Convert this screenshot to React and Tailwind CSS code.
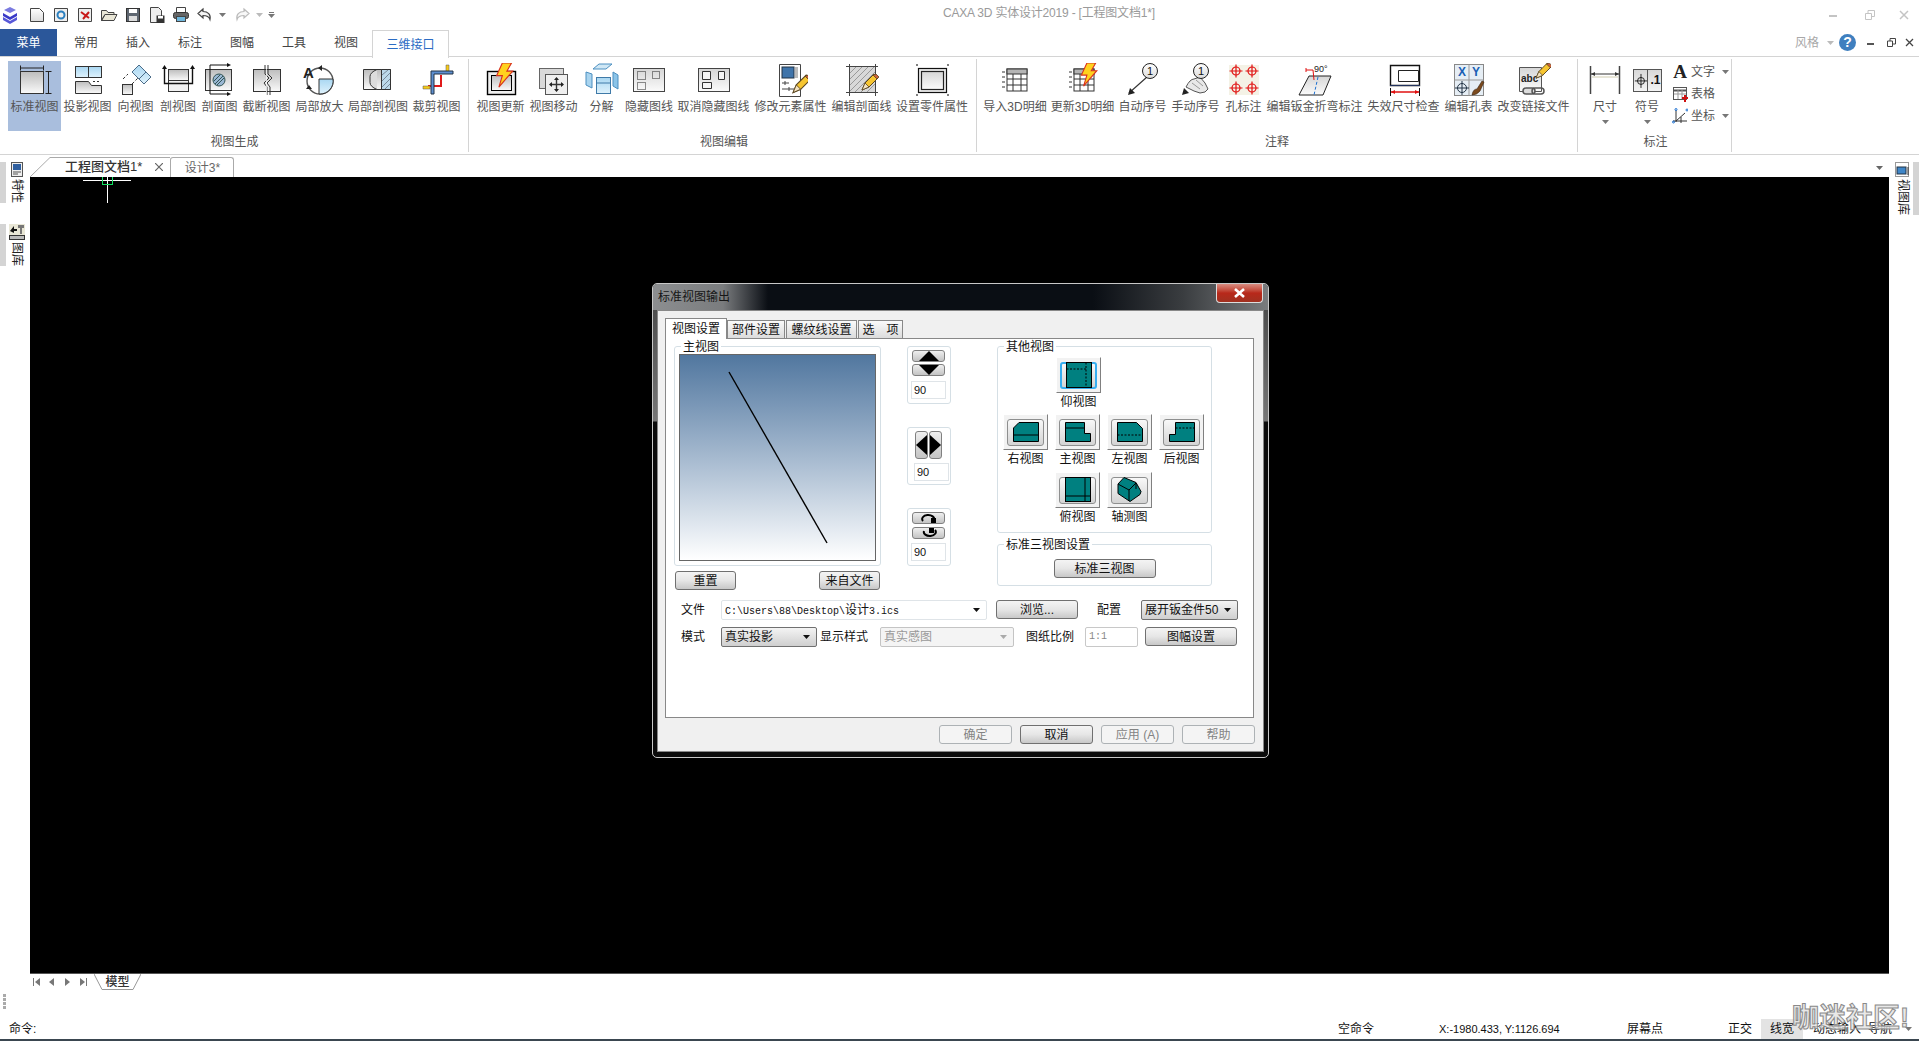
import React from "react";

const D = "#333";
const Bolt = ({ x = 0, y = 0, s = 1 }) => (
  <path transform={`translate(${x} ${y}) scale(${s})`} d="M9 0h8l-4 7h5L6 21l3-10H4z" fill="#ffd21e" stroke="#d8321e" strokeWidth="1" />
);
const Pencil = ({ x = 0, y = 0, s = 1 }) => (
  <g transform={`translate(${x} ${y}) scale(${s})`}>
    <path d="M0 16l3-7L12 0l4 4-9 9z" fill="#f6c530" stroke="#5a4520" strokeWidth="1" />
    <path d="M11 1l4 4 2-2-3-3z" fill="#c9603a" stroke="#5a4520" strokeWidth=".8" />
    <path d="M0 16l3-7 4 4z" fill="#f4e3c0" stroke="#5a4520" strokeWidth=".8" />
  </g>
);
const Target = ({ x, y }) => (
  <g stroke="#e01010" fill="none" strokeWidth="1.2">
    <circle cx={x} cy={y} r="4" />
    <path d={`M${x - 6.5} ${y}h13M${x} ${y - 6.5}v13`} />
  </g>
);
const Table = ({ x = 0 }) => (
  <g transform={`translate(${x} 0)`}>
    <rect x="6" y="6" width="20" height="22" fill="#fff" stroke={D} />
    <rect x="6" y="6" width="20" height="5" fill="#b5b5b5" stroke={D} />
    <path d="M6 16h20M6 22h20M12 11v17M20 11v17" stroke={D} />
    <path d="M1 9h3M1 14h3M1 19h3M1 24h3" stroke={D} />
  </g>
);

const Ico = ({ children, w = 34 }) => (
  <svg width={w} height="34" viewBox={`0 0 ${w} 34`} fill="none">
    {children}
  </svg>
);

const icons = {
  std: (
    <Ico>
      <rect x="2.5" y="8.5" width="23" height="22" fill="url(#gg)" stroke={D} />
      <path d="M2.5 5h23M2.5 2.5v5M25.5 2.5v5M30.5 8.500v22M27.500 8.500h6M27.500 30.500h6" stroke="#222" />
    </Ico>
  ),
  proj: (
    <Ico>
      <rect x="4.500" y="3.500" width="26" height="11" fill="url(#gb)" stroke={D} />
      <path d="M17.500 3.500v11" stroke={D} />
      <path d="M4.500 18.500h13l3 4h10v8h-26z" fill="url(#gg)" stroke={D} />
      <path d="M22 18.500h8" stroke={D} strokeDasharray="2 2" />
    </Ico>
  ),
  dir: (
    <Ico>
      <path d="M13 9l7-7 12 12-7 7z" fill="url(#gb)" stroke="#4b6c88" />
      <path d="M20 16l7-7" stroke="#4b6c88" />
      <rect x="3.500" y="21.500" width="10" height="10" fill="url(#gg)" stroke={D} />
      <path d="M4 16l5-5M13 21l6-6" stroke={D} strokeDasharray="3 2" />
    </Ico>
  ),
  sec: (
    <Ico>
      <rect x="7.500" y="6.500" width="20" height="11" fill="url(#gg)" stroke={D} />
      <rect x="7.500" y="17.500" width="20" height="11" fill="#f2f2f2" stroke={D} />
      <path d="M3.500 5v15.500h28V5" stroke="#111" strokeWidth="1.4" />
      <path d="M1 6l2.500-4 2.500 4zM29 6l2.500-4 2.500 4z" fill="#111" />
    </Ico>
  ),
  secf: (
    <Ico>
      <rect x="2.500" y="6.500" width="26" height="21" fill="url(#gg)" stroke={D} />
      <circle cx="16" cy="17" r="6" fill="#9ab7d3" stroke="#355" />
      <path d="M12 21l8-8M11 18l6-6M14 22l7-7" stroke="#355" />
      <path d="M7 31V2h18M7 31h18" stroke="#111" />
      <path d="M24 0l4 2-4 2zM24 29l4 2-4 2z" fill="#111" />
    </Ico>
  ),
  brk: (
    <Ico>
      <rect x="3.500" y="6.500" width="27" height="22" fill="url(#gg)" stroke={D} />
      <path d="M15 2v9l4 4-5 5 3 4v8M18 2v9l4 4-5 5 3 4v8" stroke={D} fill="none" />
      <path d="M16 6h1v26h-1z" fill="#fff" opacity=".7" />
    </Ico>
  ),
  zoom: (
    <Ico>
      <circle cx="17" cy="18" r="13" stroke="#555" strokeWidth="1.4" />
      <path d="M16 16h14a13 13 0 0 1-13 15h-1z" fill="url(#gb)" stroke={D} />
      <text x="0" y="15" fontSize="15" fontWeight="700" fill="#222" fontFamily="Liberation Sans">A</text>
      <path d="M19 2l-4 3 4 3zM6 22l-3 4h6z" fill="#222" />
    </Ico>
  ),
  lsec: (
    <Ico>
      <path d="M2.500 6.500h27v20h-27z" fill="url(#gg)" stroke={D} />
      <path d="M20.500 6.500h9v20h-9z" fill="#bcd9ea" stroke={D} />
      <path d="M21 12l6-5M21 18l8-8M21 24l8-8M24 26l5-5" stroke="#789" />
      <path d="M10.500 6.500l6 0-5 0zM16 6.500q-7 3-7 7v6q0 4 7 7" stroke={D} fill="#ddd" />
    </Ico>
  ),
  crop: (
    <Ico>
      <path d="M8 29V22h12V12h2v12H8z" fill="#e01a1a" />
      <path d="M3 23h7v3H3zM26 2h3v7h-3z" fill="#f7ca18" stroke="#555" strokeWidth=".5" />
      <path d="M11 31V8h22v3H14v20z" fill="#5d8fd0" stroke="#234" />
    </Ico>
  ),
  upd: (
    <Ico>
      <rect x="3.500" y="8.500" width="28" height="23" fill="#eee" stroke="#000" strokeWidth="1.400" />
      <rect x="7.500" y="12.500" width="20" height="15" fill="url(#gg)" stroke="#000" />
      <Bolt x="8" y="0" s="1.150" />
    </Ico>
  ),
  move: (
    <Ico>
      <rect x="2.500" y="5.500" width="24" height="20" fill="#d9d9d9" stroke="#666" />
      <rect x="8.500" y="11.500" width="22" height="20" fill="#efefef" stroke="#555" />
      <path d="M19.500 15v13M13 21.500h13" stroke="#333" strokeWidth="1.400" />
      <path d="M19.500 14l-2.500 3h5zM19.500 29l-2.500-3h5zM12 21.500l3-2.500v5zM27 21.500l-3-2.500v5z" fill="#222" />
    </Ico>
  ),
  exp: (
    <Ico>
      <path d="M8 6l6-5h13l-6 5z" fill="#cfe7f5" stroke="#4c8fc0" />
      <path d="M1 9l6 2v14l-6-3z" fill="#a9d4ef" stroke="#4c8fc0" />
      <path d="M28 9l5 3v14l-5-3z" fill="#8cc4e8" stroke="#4c8fc0" />
      <rect x="11.500" y="14.500" width="14" height="16" fill="url(#gb)" stroke="#3f7aa8" />
      <path d="M11.500 20h14" stroke="#3f7aa8" />
    </Ico>
  ),
  hide: (
    <Ico>
      <rect x="1.500" y="5.500" width="31" height="23" fill="url(#gg2)" stroke="#444" />
      <path d="M5.500 8.500h8v8h-8zM20.500 8.500h7v7h-7zM5.500 19.500h8v7h-8z" stroke="#222" strokeDasharray="1 1" />
    </Ico>
  ),
  unhide: (
    <Ico>
      <rect x="1.500" y="5.500" width="31" height="23" fill="url(#gg2)" stroke="#444" />
      <path d="M5.500 8.500h8v8h-8zM21.500 8.500h6v8h-6zM5.500 19.500h9v6h-9z" stroke="#333" fill="#f5f5f5" />
    </Ico>
  ),
  attr: (
    <Ico>
      <path d="M5.500 1.500h21v32h-21z" fill="#fff" stroke="#444" />
      <rect x="8" y="4" width="12" height="11" fill="#3f74aa" stroke="#234" />
      <rect x="21" y="4" width="3" height="11" fill="#bbb" />
      <path d="M8 20h7M8 26h12M11 18v4M15 24v4" stroke="#444" />
      <Pencil x="19" y="12" s="1.100" />
    </Ico>
  ),
  hatch: (
    <Ico>
      <rect x="4.500" y="3.500" width="26" height="26" fill="#d8d8d8" />
      <path d="M4 29L30 3M10 29L30 9M16 29L30 15M4 23L24 3M4 17L18 3M4 11L12 3M22 29l8-8" stroke="#999" />
      <path d="M1 3.500h32M1 29.500h32M4.500 1v32M30.500 1v32" stroke="#444" />
      <Pencil x="17" y="11" s="1" />
    </Ico>
  ),
  part: (
    <Ico>
      <rect x="3.500" y="5.500" width="28" height="24" fill="#eee" stroke="#111" strokeWidth="1.200" />
      <rect x="6.500" y="8.500" width="22" height="18" fill="url(#gg2)" stroke="#222" strokeWidth="1.200" />
      <path d="M1 2h2M32 2h2M1 32h2M32 32h2" stroke="#000" />
    </Ico>
  ),
  imp: <Ico><Table x="3" /></Ico>,
  up3: (
    <Ico>
      <Table x="2" />
      <Bolt x="11" y="0" s="1.100" />
    </Ico>
  ),
  auto: (
    <Ico>
      <path d="M3 30L21 14" stroke="#333" strokeWidth="1.200" />
      <path d="M2 32l2-7 5 5z" fill="#222" />
      <circle cx="24" cy="8" r="7.500" fill="url(#gg3)" stroke="#222" />
      <text x="24" y="12" fontSize="11" fill="#111" textAnchor="middle" fontFamily="Liberation Sans">1</text>
    </Ico>
  ),
  man: (
    <Ico>
      <path d="M3 32l2-7 5 5z" fill="#222" />
      <path d="M7 24q4-8 8-8l6-2 5 6 3 6q-2 4-8 4l-6-2z" fill="#e8e8e8" stroke="#555" />
      <path d="M13 20l8 6M17 17l7 6" stroke="#999" />
      <circle cx="22" cy="8" r="7.500" fill="url(#gg3)" stroke="#222" />
      <text x="22" y="12" fontSize="11" fill="#111" textAnchor="middle" fontFamily="Liberation Sans">1</text>
    </Ico>
  ),
  hole: (
    <Ico>
      <rect x="2" y="2" width="30" height="30" fill="#f4f2e6" />
      <Target x="9" y="8" />
      <Target x="25" y="8" />
      <Target x="9" y="25" />
      <Target x="25" y="25" />
    </Ico>
  ),
  bend: (
    <Ico w="36">
      <path d="M2 32L12 13h22l-8 19z" fill="url(#gg2)" stroke="#222" />
      <path d="M21 14l-4 18" stroke="#1c6fd0" strokeDasharray="3 2" />
      <path d="M9 7h7l1 10M9 5v4" stroke="#e01010" />
      <text x="17" y="9" fontSize="9" fill="#222" fontFamily="Liberation Sans">90°</text>
    </Ico>
  ),
  chk: (
    <Ico>
      <path d="M3.500 2.500h29v20h-29z" fill="#fff" stroke="#111" strokeWidth="1.400" />
      <path d="M11.500 7.500h20v11h-20z" stroke="#222" />
      <path d="M3.500 22.500h29" stroke="#35a" strokeDasharray="1 1" />
      <path d="M4 29h28" stroke="#e01010" strokeWidth="1.500" />
      <path d="M4 29l4-2v4zM32 29l-4-2v4z" fill="#e01010" />
      <path d="M3.500 25v8M32.500 25v8" stroke="#111" />
    </Ico>
  ),
  holetb: (
    <Ico>
      <rect x="2.500" y="1.500" width="29" height="31" fill="#e6eef5" stroke="#888" />
      <path d="M17 1.500v31M2.500 17h29" stroke="#999" />
      <text x="10" y="13" fontSize="12" fontWeight="700" fill="#1a5fb4" textAnchor="middle" fontFamily="Liberation Sans">X</text>
      <text x="24" y="13" fontSize="12" fontWeight="700" fill="#1a5fb4" textAnchor="middle" fontFamily="Liberation Sans">Y</text>
      <circle cx="10" cy="25" r="4.500" stroke="#234" />
      <path d="M3 25h14M10 18v14" stroke="#234" />
      <path d="M20 32q1-6 5-6l5-8 2 1-4 9q-3 4-8 4z" fill="#7b4a1e" stroke="#3a2410" strokeWidth=".6" />
    </Ico>
  ),
  link: (
    <Ico>
      <path d="M2.500 4.500h22v24h-22z" fill="url(#gg2)" stroke="#555" />
      <text x="4" y="19" fontSize="10" fontWeight="700" fill="#222" fontFamily="Liberation Sans">abc</text>
      <Pencil x="19" y="0" s=".95" />
      <rect x="6" y="25" width="12" height="6" rx="3" fill="#ddd" stroke="#555" strokeWidth="1.500" />
      <rect x="15" y="25" width="12" height="6" rx="3" fill="none" stroke="#555" strokeWidth="1.500" />
    </Ico>
  ),
};

const Item = ({ icon, label, w = "w-[53px]", hi }) => (
  <div className={`${w} h-[70px] flex flex-col items-center shrink-0 ${hi ? "bg-[#a9bedd]" : ""}`}>
    <div className="h-[38px] flex items-center justify-center">{icons[icon]}</div>
    <div className="h-[16px] leading-[16px] whitespace-nowrap">{label}</div>
  </div>
);

const Group = ({ w, pl, label, lp, children }) => (
  <div className={`${w} ${pl} h-[93px] mt-[2px] border-r border-[#d4d4d4] flex flex-col shrink-0`}>
    <div className="flex h-[70px] mt-[2px]">{children}</div>
    <div className={`${lp} h-[16px] leading-[16px] mt-[3px] text-center text-[#555]`}>{label}</div>
  </div>
);

const Tri = ({ c = "#777" }) => (
  <svg width="7" height="4" viewBox="0 0 7 4" className="shrink-0">
    <path d="M0 0h7L3.500 4z" fill={c} />
  </svg>
);

const Q = ({ children, w = 24 }) => (
  <div className={`${w === 24 ? "w-[24px]" : "w-[11px]"} h-[18px] flex items-center justify-center shrink-0`}>
    <svg width={w === 24 ? 18 : 9} height="18" viewBox={w === 24 ? "0 0 18 18" : "0 0 9 18"} fill="none">
      {children}
    </svg>
  </div>
);

const TitleBar = () => (
  <div className="h-[29px] flex items-center relative shrink-0">
    <div className="w-[25px] pl-[2px] shrink-0">
      <svg width="16" height="18" viewBox="0 0 16 18">
        <path d="M8 1l6 3-6 3-6-3z" fill="#7a7ae0" />
        <path d="M1 7l7 4 7-4v3l-7 4-7-4z" fill="#3a3ac8" />
        <path d="M1 11l7 4 7-4v3l-7 4-7-4z" fill="#5858d8" />
      </svg>
    </div>
    <Q><path d="M2.500 2.500h9l4 4v9h-13z" fill="url(#gg3)" stroke="#444" /></Q>
    <Q>
      <path d="M2.500 2.500h13v13h-13z" fill="#eee" stroke="#444" />
      <circle cx="9" cy="9" r="3.500" stroke="#2a7fbf" strokeWidth="2" />
    </Q>
    <Q>
      <path d="M2.500 2.500h13v13h-13z" fill="#eee" stroke="#444" />
      <path d="M5 6l8 6M13 6l-6 7" stroke="#c81818" strokeWidth="2" />
    </Q>
    <Q><path d="M1.500 14.500v-10h5l1.500 2h6v2H5l-3.500 6zM5 8.500h12l-3 6H1.500z" fill="#e9e6d6" stroke="#444" /></Q>
    <Q>
      <rect x="2.500" y="2.500" width="13" height="13" fill="#5e6670" stroke="#333" />
      <rect x="5" y="3" width="8" height="4" fill="#fff" />
      <rect x="5" y="10" width="8" height="5" fill="#ddd" />
    </Q>
    <Q>
      <path d="M2.500 1.500h8l3 3v12h-11z" fill="#eee" stroke="#444" />
      <rect x="8.500" y="9.500" width="8" height="7.500" fill="#333" />
      <rect x="10" y="10" width="5" height="2.500" fill="#fff" />
    </Q>
    <Q>
      <path d="M4.500 6V1.500h9V6" fill="#fff" stroke="#444" />
      <rect x="1.500" y="6.500" width="15" height="6" rx="2" fill="#666" stroke="#333" />
      <rect x="4.500" y="10.500" width="9" height="5" fill="#6fb7dd" stroke="#444" />
    </Q>
    <Q><path d="M7 3L2 7.500 7 12V9.500c4 0 6 1 7 4 1-5-2-8-7-8z" fill="#f4f4f4" stroke="#444" strokeWidth="1.200" /></Q>
    <div className="w-[11px] flex justify-center"><Tri /></div>
    <div className="w-[2px]" />
    <Q><path d="M11 3l5 4.500L11 12V9.500c-4 0-6 1-7 4-1-5 2-8 7-8z" fill="#f8f8f8" stroke="#bbb" strokeWidth="1.200" /></Q>
    <div className="w-[11px] flex justify-center"><Tri c="#bbb" /></div>
    <div className="w-[8px] flex flex-col items-center gap-[1px] ml-[2px]">
      <div className="w-[5px] h-[1px] bg-[#777]" />
      <Tri />
    </div>
    <div className="absolute left-[943px] top-[3px] leading-[20px] text-[#9a9a9a] tracking-[-0.2px] whitespace-nowrap">CAXA 3D 实体设计2019 - [工程图文档1*]</div>
    <div className="ml-auto flex items-center pr-[10px]">
      <div className="w-[8px] h-[2px] bg-[#c4c4c4] mt-[2px]" />
      <svg className="ml-[28px]" width="10" height="10" viewBox="0 0 10 10" fill="none" stroke="#c4c4c4"><path d="M.5 3.500h6v6h-6zM3 3.500V.5h6.500v6H7" /></svg>
      <svg className="ml-[24px]" width="10" height="10" viewBox="0 0 10 10" fill="none" stroke="#c4c4c4" strokeWidth="1.500"><path d="M1 1l8 8M9 1l-8 8" /></svg>
    </div>
  </div>
);

const Tabs = () => (
  <div className="h-[28px] flex shrink-0 border-b border-[#d4d4d4]">
    <div className="w-[57px] h-[27px] bg-[#2b579a] text-white flex items-center justify-center">菜单</div>
    <div className="w-[3px]" />
    {["常用", "插入", "标注", "图幅", "工具", "视图"].map((t) => (
      <div key={t} className="w-[52px] flex items-center justify-center text-[#444]">{t}</div>
    ))}
    <div className="w-[77px] h-[28px] mt-[1px] bg-white border-x border-t border-[#d4d4d4] text-[#2b6cc4] flex items-center justify-center">三维接口</div>
    <div className="ml-auto flex items-center pr-[5px]">
      <span className="text-[#a8a8a8] w-[32px]">风格</span>
      <Tri c="#bbb" />
      <div className="ml-[5px] w-[17px] h-[17px] rounded-full bg-[#3f7fbf] text-white text-[14px] font-bold leading-[17px] text-center">?</div>
      <div className="ml-[11px] w-[7px] h-[2px] bg-[#555] mt-[2px]" />
      <svg className="ml-[13px]" width="9" height="9" viewBox="0 0 9 9" fill="none" stroke="#444"><path d="M.5 3h5v5.500h-5zM3 3V.5h5.500V6H6" /></svg>
      <svg className="ml-[9px]" width="9" height="9" viewBox="0 0 9 9" fill="none" stroke="#444" strokeWidth="1.300"><path d="M1 1l7 7M8 1L1 8" /></svg>
    </div>
  </div>
);

const Ribbon = () => (
  <div className="h-[98px] flex border-b border-[#d4d4d4] shrink-0 text-[#555]">
    <Group w="w-[469px]" pl="pl-[8px]" lp="pr-[7px]" label="视图生成">
      <Item icon="std" label="标准视图" hi />
      <Item icon="proj" label="投影视图" />
      <Item icon="dir" label="向视图" w="w-[43px]" />
      <Item icon="sec" label="剖视图" w="w-[42px]" />
      <Item icon="secf" label="剖面图" w="w-[41px]" />
      <Item icon="brk" label="截断视图" />
      <Item icon="zoom" label="局部放大" />
      <Item icon="lsec" label="局部剖视图" w="w-[64px]" />
      <Item icon="crop" label="裁剪视图" />
    </Group>
    <Group w="w-[508px]" pl="pl-[5px]" lp="pr-[2px]" label="视图编辑">
      <Item icon="upd" label="视图更新" />
      <Item icon="move" label="视图移动" />
      <Item icon="exp" label="分解" w="w-[43px]" />
      <Item icon="hide" label="隐藏图线" w="w-[52px]" />
      <Item icon="unhide" label="取消隐藏图线" w="w-[77px]" />
      <Item icon="attr" label="修改元素属性" w="w-[77px]" />
      <Item icon="hatch" label="编辑剖面线" w="w-[65px]" />
      <Item icon="part" label="设置零件属性" w="w-[76px]" />
    </Group>
    <Group w="w-[601px]" pl="pl-[5px]" lp="pr-[5px]" label="注释">
      <Item icon="imp" label="导入3D明细" w="w-[66px]" />
      <Item icon="up3" label="更新3D明细" w="w-[69px]" />
      <Item icon="auto" label="自动序号" w="w-[51px]" />
      <Item icon="man" label="手动序号" w="w-[55px]" />
      <Item icon="hole" label="孔标注" w="w-[41px]" />
      <Item icon="bend" label="编辑钣金折弯标注" w="w-[101px]" />
      <Item icon="chk" label="失效尺寸检查" w="w-[77px]" />
      <Item icon="holetb" label="编辑孔表" />
      <Item icon="link" label="改变链接文件" w="w-[77px]" />
    </Group>
    <Group w="w-[154px]" pl="pl-[7px]" lp="pr-[5px]" label="标注">
      <div className="w-[40px] h-[70px] flex flex-col items-center shrink-0">
        <div className="h-[38px] flex items-center">
          <svg width="32" height="30" viewBox="0 0 32 30" fill="none">
            <path d="M1.500 1v28M30.500 1v28" stroke="#444" strokeWidth="1.500" />
            <path d="M2 9h28" stroke="#333" />
            <path d="M2 9l4-2v4zM30 9l-4-2v4z" fill="#333" />
            <path d="M3 11h26v2H3z" fill="#e8e6d8" />
          </svg>
        </div>
        <div className="h-[16px] leading-[16px]">尺寸</div>
        <div className="mt-[5px]"><Tri /></div>
      </div>
      <div className="w-[44px] h-[70px] flex flex-col items-center shrink-0">
        <div className="h-[38px] flex items-center">
          <div className="w-[29px] h-[23px] border border-[#555] bg-gradient-to-b from-[#d8d8d8] to-[#f4f4f4] flex items-center text-[#111]">
            <svg width="16" height="21" viewBox="0 0 16 21" fill="none" stroke="#111"><circle cx="8" cy="11" r="4" /><path d="M1 11h14M8 3v16" /></svg>
            <div className="h-[21px] border-l border-[#555] text-[12px] font-bold leading-[21px] pl-[2px]">.1</div>
          </div>
        </div>
        <div className="h-[16px] leading-[16px]">符号</div>
        <div className="mt-[5px]"><Tri /></div>
      </div>
      <div className="flex flex-col w-[60px] shrink-0">
        {[
          { t: "文字", a: 1, i: <span className="text-[19px] font-bold text-[#222] leading-[22px] [font-family:'Liberation_Serif',serif]">A</span> },
          { t: "表格", a: 0, i: (
            <svg width="15" height="15" viewBox="0 0 15 15" fill="none"><rect x=".5" y=".5" width="13" height="12" fill="#fff" stroke="#555" /><path d="M.5 3.500h13" stroke="#555" strokeWidth="2" /><path d="M5 3v9M9 3v9M1 7h12" stroke="#999" /><path d="M9 11h6M12 8v7" stroke="#d01010" strokeWidth="2" /></svg>
          ) },
          { t: "坐标", a: 1, i: (
            <svg width="16" height="16" viewBox="0 0 16 16" fill="none" stroke="#333"><path d="M4 2v12M1 13h14M4 13l9-8M9 15V9" /><circle cx="4" cy="1.500" r="1" stroke="#1a6fd0" /><circle cx="15" cy="2" r="1" stroke="#1a6fd0" /><circle cx="1.500" cy="14" r="1" stroke="#1a6fd0" /></svg>
          ) },
        ].map((r) => (
          <div key={r.t} className="h-[22px] flex items-center">
            <div className="w-[22px] flex justify-center shrink-0">{r.i}</div>
            <span className="w-[31px] shrink-0">{r.t}</span>
            {r.a ? <Tri /> : null}
          </div>
        ))}
      </div>
    </Group>
  </div>
);

const DocTabs = () => (
  <div className="h-[22px] flex items-end relative shrink-0">
    <div className="relative w-[140px] h-[20px] flex items-center">
      <svg className="absolute left-0 top-0" width="140" height="20" fill="none"><path d="M0 20L20 .5h120" stroke="#aaa" /></svg>
      <span className="ml-[35px] w-[90px] whitespace-nowrap text-[13px] text-[#333] font-medium">工程图文档1*</span>
      <svg width="8" height="8" viewBox="0 0 8 8" stroke="#666" fill="none" strokeWidth="1.200"><path d="M0 0l8 8M8 0L0 8" /></svg>
    </div>
    <div className="w-[64px] h-[20px] pl-[1px] border-x border-t border-[#aaa] rounded-tr-[3px] rounded-tl-[3px] flex items-center justify-center text-[#666]">设计3*</div>
    <div className="ml-auto mb-[7px] mr-[6px]"><Tri c="#666" /></div>
  </div>
);

const Canvas = () => (
  <div className="flex-1 bg-black relative overflow-hidden border-b border-[#555]">
    <div className="absolute left-[53px] top-[3px] w-[48px] h-px bg-white" />
    <div className="absolute left-[77px] top-0 w-px h-[26px] bg-white" />
    <div className="absolute left-[72px] -top-[1px] w-[11px] h-[9px] border border-[#10e060]" />
  </div>
);

const Side = ({ side, items }) => (
  <div className={`w-[30px] shrink-0 flex flex-col gap-[21px] pt-[7px] ${side === "r" ? "items-end" : ""}`}>
    {items.map((it) => (
      <div key={it.t} className={`flex ${side === "r" ? "flex-row-reverse w-[29px]" : "w-[30px]"}`}>
        <div className="w-[6px] bg-[#d4d4d4]" />
        <div className={`flex flex-col items-center ${side === "r" ? "w-[23px] pl-[2px]" : "w-[22px]"}`}>
          {it.i}
          <div className="[writing-mode:vertical-rl] [text-orientation:sideways] leading-[14px] text-[#222] mt-[2px]">{it.t}</div>
        </div>
      </div>
    ))}
  </div>
);

const Btn = ({ children, w, dis, cls = "" }) => (
  <div
    className={`${w} h-[19px] shrink-0 rounded-[3px] border flex items-center justify-center leading-none ${
      dis
        ? "border-[#adb2b5] bg-[#f4f4f4] text-[#838383]"
        : "border-[#707070] bg-gradient-to-b from-[#f4f4f4] via-[#e6e6e6] to-[#c8c8c8] text-[#111]"
    } ${cls}`}
  >
    {children}
  </div>
);

const Box = ({ cls, legend, children }) => (
  <div className={`relative border border-[#d5dfe5] rounded-[3px] ${cls}`}>
    {legend ? <div className="absolute left-[6px] -top-[6px] bg-white px-[2px] leading-[13px] text-[#111]">{legend}</div> : null}
    {children}
  </div>
);

const Num = ({ ml = "ml-[3px]" }) => (
  <div className={`${ml} w-[35px] h-[18px] border border-[#dfe4e8] bg-white text-[11px] leading-[17px] pl-[2px] text-[#111]`}>90</div>
);

const Spin = ({ children, num }) => (
  <Box cls="w-[44px] h-[58px] flex flex-col">
    {children}
    {num}
  </Box>
);

const MiniBtn = ({ children, cls }) => (
  <div className={`${cls} rounded-[3px] border border-[#808080] bg-gradient-to-b from-[#efefef] to-[#c4c4c4] flex items-center justify-center`}>{children}</div>
);

const shapes = {
  bottom: <g><rect x=".5" y=".5" width="25" height="25" fill="#008080" stroke="#000" /><path d="M.5 7h20M20 .5v25" stroke="#000" strokeDasharray="2 1.500" /></g>,
  right: <g><path d="M6 .5h19.500v19H.5V6z" fill="#008080" stroke="#000" /><path d="M.5 13h25" stroke="#000" /></g>,
  main: <g><path d="M.5.5h19v11h6v8H.5z" fill="#008080" stroke="#000" /><path d="M.5 6h19" stroke="#000" /></g>,
  left: <g><path d="M.5.5h19l6 6v13H.5z" fill="#008080" stroke="#000" /><path d="M.5 13h25" stroke="#000" strokeDasharray="2 1.500" /></g>,
  back: <g><path d="M6.500.5h19v19H.5v-7h6z" fill="#008080" stroke="#000" /><path d="M6.500 6h19" stroke="#000" strokeDasharray="2 1.500" /></g>,
  top: <g><rect x=".5" y=".5" width="25" height="24" fill="#008080" stroke="#000" /><path d="M.5 19h25M20 .5v24" stroke="#000" /></g>,
  iso: <g><path d="M7 .5l12 5 5 9-1 3-10 7-12-8V7z" fill="#008080" stroke="#000" /><path d="M1 7l11 6 7-7M12 13v11M19 6v6" stroke="#000" /></g>,
};

const ViewBtn = ({ s, label, focus }) => (
  <div className="w-[45px] flex flex-col items-center">
    <div className="w-[45px] h-[36px] bg-[#f2f2f2] border border-t-white border-l-white border-r-[#808080] border-b-[#808080] flex items-center justify-center">
      <div className={`w-[37px] h-[27px] rounded-[3px] border flex items-center justify-center bg-gradient-to-b from-[#f8f8f8] to-[#d4d4d4] ${focus ? "border-[#37aef0] border-2" : "border-[#8e8f8f]"}`}>
        <svg width="26" height={s === "bottom" || s === "top" || s === "iso" ? 26 : 20} viewBox={`0 0 26 ${s === "bottom" || s === "top" || s === "iso" ? 26 : 20}`} fill="none">{shapes[s]}</svg>
      </div>
    </div>
    <div className="h-[15px] leading-[15px] mt-[2px] whitespace-nowrap text-[#111]">{label}</div>
  </div>
);

const Combo = ({ w, children, dis, flat, cls = "" }) => (
  <div
    className={`${w} h-[20px] shrink-0 rounded-[2px] border flex items-center pl-[3px] pr-[6px] ${
      dis
        ? "border-[#c4c4c4] bg-[#f4f4f4] text-[#999]"
        : flat
        ? "border-[#dfe4e8] bg-white text-[#111]"
        : "border-[#707070] bg-gradient-to-b from-[#f4f4f4] to-[#cfcfcf] text-[#111]"
    } ${cls}`}
  >
    <span className="flex-1 whitespace-nowrap overflow-hidden">{children}</span>
    <Tri c={dis ? "#aaa" : "#111"} />
  </div>
);

const Dialog = () => (
  <div className="absolute left-[652px] top-[283px] w-[617px] h-[475px] rounded-[5px] border border-[#c8c8c8] bg-[linear-gradient(to_bottom,#444_0,#777_137px,#0b0b0b_138px,#0b0b0b_100%)] flex flex-col overflow-hidden text-xs">
    <div className="h-[26px] shrink-0 flex items-center pl-[5px] relative bg-[linear-gradient(to_right,#8c8e90_0,#7a7c7e_70px,#0a0e14_115px,#0a0e14_440px,#3a3d40_530px,#7a7c7e_100%)]">
      <span className="text-[#161616]">标准视图输出</span>
      <div className="absolute right-[5px] top-0 w-[47px] h-[19px] rounded-b-[4px] border border-[#ddd] border-t-0 bg-gradient-to-b from-[#d98b80] via-[#b8281a] to-[#a03020] flex items-center justify-center">
        <svg width="13" height="10" viewBox="0 0 13 10" stroke="#fff" strokeWidth="2.600" fill="none"><path d="M2 1l9 8M11 1L2 9" /></svg>
      </div>
    </div>
    <div className="mx-[4px] h-[442px] shrink-0 bg-[#f0f0f0] border border-[#888] flex flex-col pl-[7px] pr-[9px]">
      <div className="h-[27px] shrink-0 flex items-end">
        <div className="w-[62px] h-[21px] bg-white border-x border-t border-[#888] flex items-center justify-center text-[#111] relative z-10 -mb-px">视图设置</div>
        <div className="w-[58px] h-[18px] border-x border-t border-[#888] bg-gradient-to-b from-[#fafafa] to-[#dcdcdc] flex items-center justify-center text-[#111]">部件设置</div>
        <div className="w-[71px] ml-[1px] h-[18px] border-x border-t border-[#888] bg-gradient-to-b from-[#fafafa] to-[#dcdcdc] flex items-center justify-center text-[#111]">螺纹线设置</div>
        <div className="w-[45px] ml-[1px] h-[18px] border-x border-t border-[#888] bg-gradient-to-b from-[#fafafa] to-[#dcdcdc] flex items-center justify-center text-[#111] whitespace-pre">选　项</div>
      </div>
      <div className="h-[380px] shrink-0 bg-white border border-[#888] pt-[7px] pl-[8px] pr-[14px] flex flex-col">
        <div className="flex h-[244px] shrink-0">
          <div className="w-[207px] shrink-0 flex flex-col">
            <Box cls="h-[220px] pt-[7px] pl-[4px]" legend="主视图">
              <div className="w-[197px] h-[207px] border border-[#666] bg-gradient-to-b from-[#51779f] to-white">
                <svg width="195" height="205" viewBox="0 0 195 205" fill="none">
                  <path d="M49 17L147 188" stroke="#000" strokeWidth="1.400" />
                </svg>
              </div>
            </Box>
            <div className="flex justify-between mt-[5px] pl-[1px] pr-[1px]">
              <Btn w="w-[61px]">重置</Btn>
              <Btn w="w-[61px]">来自文件</Btn>
            </div>
          </div>
          <div className="w-[44px] ml-[26px] shrink-0 flex flex-col gap-[23px]">
            <Spin num={<div className="mt-[5px]"><Num /></div>}>
              <div className="flex flex-col gap-[2px] mt-[3px] ml-[4px]">
                <MiniBtn cls="w-[33px] h-[12px]"><svg width="20" height="10" viewBox="0 0 20 10"><path d="M10 0l10 10H0z" fill="#000" /></svg></MiniBtn>
                <MiniBtn cls="w-[33px] h-[12px]"><svg width="20" height="10" viewBox="0 0 20 10"><path d="M10 10L20 0H0z" fill="#000" /></svg></MiniBtn>
              </div>
            </Spin>
            <Spin num={<div className="mt-[4px]"><Num ml="ml-[6px]" /></div>}>
              <div className="flex gap-[1px] mt-[3px] ml-[7px]">
                <MiniBtn cls="w-[13px] h-[28px]"><svg width="11" height="20" viewBox="0 0 11 20" className="shrink-0"><path d="M0 10L11 0v20z" fill="#000" /></svg></MiniBtn>
                <MiniBtn cls="w-[13px] h-[28px]"><svg width="11" height="20" viewBox="0 0 11 20" className="shrink-0"><path d="M11 10L0 0v20z" fill="#000" /></svg></MiniBtn>
              </div>
            </Spin>
            <Spin num={<div className="mt-[4px]"><Num /></div>}>
              <div className="flex flex-col gap-[3px] mt-[3px] ml-[4px]">
                <MiniBtn cls="w-[33px] h-[12px]"><svg width="16" height="10" viewBox="0 0 16 10" fill="none"><path d="M2 8a6 4 0 1 1 11-1" stroke="#000" strokeWidth="2" /><path d="M10 5h5v5h-5z" fill="#000" /></svg></MiniBtn>
                <MiniBtn cls="w-[33px] h-[12px]"><svg width="16" height="10" viewBox="0 0 16 10" fill="none"><path d="M14 2a6 4 0 1 1-11 1" stroke="#000" strokeWidth="2" /><path d="M8 0h5v5H8z" fill="#000" /></svg></MiniBtn>
              </div>
            </Spin>
          </div>
          <div className="w-[215px] ml-[46px] shrink-0 flex flex-col gap-[11px]">
            <Box cls="h-[187px] pt-[10px] pl-[5px] flex flex-col" legend="其他视图">
              <div className="flex pl-[53px]"><ViewBtn s="bottom" label="仰视图" focus /></div>
              <div className="flex gap-[7px] mt-[4px]">
                <ViewBtn s="right" label="右视图" />
                <ViewBtn s="main" label="主视图" />
                <ViewBtn s="left" label="左视图" />
                <ViewBtn s="back" label="后视图" />
              </div>
              <div className="flex gap-[7px] pl-[52px] mt-[5px]">
                <ViewBtn s="top" label="俯视图" />
                <ViewBtn s="iso" label="轴测图" />
              </div>
            </Box>
            <Box cls="h-[42px] pt-[14px] flex justify-center" legend="标准三视图设置">
              <Btn w="w-[102px]">标准三视图</Btn>
            </Box>
          </div>
        </div>
        <div className="flex items-center mt-[9px] h-[21px] shrink-0">
          <span className="w-[47px] pl-[7px] text-[#111]">文件</span>
          <Combo w="w-[266px]" flat>
            <span className="text-[10px] [font-family:'Liberation_Mono',monospace]">C:\Users\88\Desktop\<span className="text-[12px] [font-family:'Noto_Sans_CJK_SC',sans-serif]">设计</span>3.ics</span>
          </Combo>
          <Btn w="w-[82px]" cls="ml-[9px]">浏览...</Btn>
          <span className="ml-[19px] w-[44px] text-[#111]">配置</span>
          <Combo w="w-[97px]">展开钣金件50</Combo>
        </div>
        <div className="flex items-center mt-[6px] h-[21px] shrink-0">
          <span className="w-[47px] pl-[7px] text-[#111]">模式</span>
          <Combo w="w-[96px]">真实投影</Combo>
          <span className="ml-[3px] w-[60px] text-[#111]">显示样式</span>
          <Combo w="w-[134px]" dis>真实感图</Combo>
          <span className="ml-[12px] w-[59px] text-[#111]">图纸比例</span>
          <div className="w-[53px] h-[20px] border border-[#c8c8c8] rounded-[2px] text-[#888] text-[10px] leading-[18px] pl-[3px] [font-family:'Liberation_Mono',monospace]">1:1</div>
          <Btn w="w-[92px]" cls="ml-[7px]">图幅设置</Btn>
        </div>
      </div>
      <div className="flex justify-end gap-[8px] mt-[7px] -mr-[1px]">
        <Btn w="w-[73px]" dis>确定</Btn>
        <Btn w="w-[73px]">取消</Btn>
        <Btn w="w-[73px]" dis>应用 (A)</Btn>
        <Btn w="w-[73px]" dis>帮助</Btn>
      </div>
    </div>
  </div>
);

export default function App() {
  return (
    <div className="w-[1919px] h-[1041px] bg-white relative overflow-hidden flex flex-col text-xs text-[#333] [font-family:'Liberation_Sans','Noto_Sans_CJK_SC',sans-serif]">
      <svg className="absolute w-0 h-0">
        <defs>
          <linearGradient id="gg" x1="0" y1="0" x2="0" y2="1"><stop offset="0" stopColor="#bdbdbd" /><stop offset="1" stopColor="#fafafa" /></linearGradient>
          <linearGradient id="gg2" x1="0" y1="0" x2="0" y2="1"><stop offset="0" stopColor="#d6d6d6" /><stop offset="1" stopColor="#fbfbfb" /></linearGradient>
          <linearGradient id="gg3" x1="0" y1="0" x2="0" y2="1"><stop offset="0" stopColor="#ffffff" /><stop offset="1" stopColor="#dcdcdc" /></linearGradient>
          <linearGradient id="gb" x1="0" y1="0" x2="0" y2="1"><stop offset="0" stopColor="#a9d7f2" /><stop offset="1" stopColor="#dff2fc" /></linearGradient>
        </defs>
      </svg>
      <TitleBar />
      <Tabs />
      <Ribbon />
      <div className="h-[835px] flex shrink-0">
        <Side
          side="l"
          items={[
            { t: "特性", i: <svg width="12" height="15" viewBox="0 0 12 15"><rect x=".5" y=".5" width="11" height="14" fill="#eee" stroke="#555" /><rect x="2" y="2" width="8" height="6" fill="#2f5f9f" /><path d="M2 10h8M2 12h5" stroke="#555" /></svg> },
            { t: "图库", i: <svg width="16" height="16" viewBox="0 0 16 16" fill="none"><rect width="16" height="16" fill="#e9e7d6" /><path d="M1 7l4-5v3h3v2H5v2z" fill="#111" /><path d="M9 1h6v3h-2v6h-2V4H9z" fill="#777" /><rect x=".5" y="11.500" width="15" height="4" fill="#bbb" stroke="#333" /></svg> },
          ]}
        />
        <div className="flex-1 flex flex-col min-w-0">
          <DocTabs />
          <Canvas />
          <div className="h-[16px] shrink-0 flex items-start">
            <div className="w-[64px] h-[16px] flex items-center pl-[3px] gap-[8px] text-[#777]">
              <svg width="7" height="8" viewBox="0 0 7 8" fill="#777"><path d="M0 0h1v8H0zM7 0v8L2 4z" /></svg>
              <svg width="5" height="8" viewBox="0 0 5 8" fill="#777" className="ml-[1px]"><path d="M5 0v8L0 4z" /></svg>
              <svg width="5" height="8" viewBox="0 0 5 8" fill="#777" className="ml-[3px]"><path d="M0 0v8l5-4z" /></svg>
              <svg width="7" height="8" viewBox="0 0 7 8" fill="#777" className="ml-[2px]"><path d="M6 0h1v8H6zM0 0v8l5-4z" /></svg>
            </div>
            <div className="relative w-[47px] h-[16px] flex items-center justify-center text-[#333] font-medium">
              <svg className="absolute left-0 top-0" width="47" height="16" fill="none"><path d="M0 0l8 15.500h31L47 0" stroke="#999" /></svg>
              模型
            </div>
          </div>
        </div>
        <Side
          side="r"
          items={[
            { t: "视图库", i: <svg width="15" height="15" viewBox="0 0 15 15" fill="none"><rect x=".5" y=".5" width="13" height="14" stroke="#333" strokeDasharray="1 1" /><rect x="2" y="5" width="9" height="7" fill="#3f86c8" stroke="#234" /><path d="M13 5v8" stroke="#333" /></svg> },
          ]}
        />
      </div>
      <div className="pl-[3px] pt-[4px] flex flex-col gap-[1px] shrink-0">
        {[0, 1, 2, 3].map((i) => <div key={i} className="w-[3px] h-[3px] bg-[#aaa]" />)}
      </div>
      <div className="mt-auto h-[20px] flex items-center shrink-0 text-[#111]">
        <span className="pl-[9px] w-[1338px]">命令:</span>
        <span className="w-[101px]">空命令</span>
        <span className="w-[188px] text-[11px]">X:-1980.433, Y:1126.694</span>
        <span className="w-[101px]">屏幕点</span>
        <span className="w-[33px]">正交</span>
        <span className="w-[42px] h-[20px] leading-[20px] bg-[#e3e3e3] text-center">线宽</span>
        <span className="w-[65px] pl-[10px] whitespace-nowrap">动态输入</span>
        <span className="w-[37px]">导航</span>
        <Tri />
      </div>
      <div className="h-[2px] bg-[#3a4650] shrink-0" />
      <div className="absolute left-[1792px] top-[1002px] text-[27px] leading-[32px] font-bold whitespace-nowrap text-[#e2e2e2]/80 [-webkit-text-stroke:1px_#8a8a8a]">咖迷社区!</div>
      <Dialog />
    </div>
  );
}
